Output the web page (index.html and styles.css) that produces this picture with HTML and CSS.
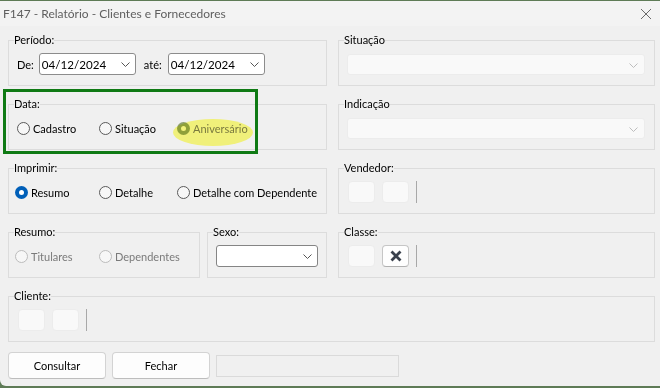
FILE: index.html
```html
<!DOCTYPE html>
<html>
<head>
  <meta charset="UTF-8">
  <title>F147 - Relatório - Clientes e Fornecedores</title>
  <link rel="stylesheet" href="styles.css">
</head>
<body>
  <div class="window">
    <div class="titlebar">
      <span class="title">F147 - Relatório - Clientes e Fornecedores</span>
      <svg class="close" width="12" height="12" viewBox="0 0 12 12">
        <path d="M1 1 L11 11 M11 1 L1 11" stroke="#6a6a6a" stroke-width="1" fill="none"/>
      </svg>
    </div>

    <div class="form">
      <fieldset class="group">
        <legend>Período:</legend>
        <div class="row">
          <span class="lbl">De:</span>
          <div class="date">04/12/2024
            <svg class="chev" width="9" height="5" viewBox="0 0 9 5"><path d="M0.5 0.5 L4.5 4.5 L8.5 0.5" stroke="#555" fill="none"/></svg>
          </div>
          <span class="lbl ate">até:</span>
          <div class="date">04/12/2024
            <svg class="chev" width="9" height="5" viewBox="0 0 9 5"><path d="M0.5 0.5 L4.5 4.5 L8.5 0.5" stroke="#555" fill="none"/></svg>
          </div>
        </div>
      </fieldset>

      <fieldset class="group">
        <legend>Situação</legend>
        <div class="row">
          <div class="combo off">
            <svg class="chev" width="9" height="5" viewBox="0 0 9 5"><path d="M0.5 0.5 L4.5 4.5 L8.5 0.5" stroke="#bdbdbd" fill="none"/></svg>
          </div>
        </div>
      </fieldset>

      <fieldset class="group">
        <legend>Data:</legend>
        <div class="row radios data-opts">
          <label class="radio"><span class="dot"></span>Cadastro</label>
          <label class="radio"><span class="dot"></span>Situação</label>
          <label class="radio disabled checked mark"><span class="dot"></span>Aniversário</label>
        </div>
      </fieldset>

      <fieldset class="group">
        <legend>Indicação</legend>
        <div class="row">
          <div class="combo off">
            <svg class="chev" width="9" height="5" viewBox="0 0 9 5"><path d="M0.5 0.5 L4.5 4.5 L8.5 0.5" stroke="#bdbdbd" fill="none"/></svg>
          </div>
        </div>
      </fieldset>

      <fieldset class="group">
        <legend>Imprimir:</legend>
        <div class="row radios print-opts">
          <label class="radio checked"><span class="dot"></span>Resumo</label>
          <label class="radio"><span class="dot"></span>Detalhe</label>
          <label class="radio"><span class="dot"></span>Detalhe com Dependente</label>
        </div>
      </fieldset>

      <fieldset class="group">
        <legend>Vendedor:</legend>
        <div class="row tools">
          <span class="tool"></span>
          <span class="tool"></span>
          <span class="sep"></span>
        </div>
      </fieldset>

      <div class="split">
        <fieldset class="group resumo">
          <legend>Resumo:</legend>
          <div class="row radios print-opts">
            <label class="radio disabled"><span class="dot"></span>Titulares</label>
            <label class="radio disabled"><span class="dot"></span>Dependentes</label>
          </div>
        </fieldset>
        <fieldset class="group sexo">
          <legend>Sexo:</legend>
          <div class="row">
            <div class="combo sexo-box">
              <svg class="chev" width="9" height="5" viewBox="0 0 9 5"><path d="M0.5 0.5 L4.5 4.5 L8.5 0.5" stroke="#555" fill="none"/></svg>
            </div>
          </div>
        </fieldset>
      </div>

      <fieldset class="group">
        <legend>Classe:</legend>
        <div class="row tools">
          <span class="tool"></span>
          <span class="tool active">
            <svg width="14" height="14" viewBox="0 0 14 14"><path d="M2.5 2.5 L11.5 11.5 M11.5 2.5 L2.5 11.5" stroke="#39404c" stroke-width="2.8" fill="none"/></svg>
          </span>
          <span class="sep"></span>
        </div>
      </fieldset>

      <fieldset class="group wide">
        <legend>Cliente:</legend>
        <div class="row tools">
          <span class="tool"></span>
          <span class="tool"></span>
          <span class="sep"></span>
        </div>
      </fieldset>
    </div>

    <div class="footer">
      <button class="btn">Consultar</button>
      <button class="btn">Fechar</button>
      <div class="status"></div>
    </div>

    <!-- annotation drawn over the dialog -->
    <div class="highlight-box"></div>
  </div>
</body>
</html>
```

FILE: styles.css
```css
body {
  margin: 0;
  background-color: #5e7b56;
  font-family: Lato, "Noto Sans", sans-serif;
  font-size: 11px;
  color: #000;
}

.window {
  position: relative;
  width: 660px;
  height: 386px;
  background-color: #f0f0f0;
  border-top: 1px solid #5e7b56;
  box-sizing: border-box;
  border-bottom-left-radius: 6px;
}

.titlebar {
  height: 25px;
  background-color: #f3f3f3;
  display: flex;
  align-items: center;
  justify-content: space-between;
  padding: 0 8px 0 3px;
}

.title {
  color: #5f5f5f;
  font-size: 12px;
}

.close {
  margin-top: 1px;
}

.form {
  display: grid;
  grid-template-columns: 319px 317px;
  column-gap: 11px;
  row-gap: 11px;
  padding: 7px 0 0 8px;
}

.group {
  margin: 0;
  height: 53px;
  box-sizing: border-box;
  border: 1px solid #dcdcdc;
  padding: 6px 8px 0 5px;
  min-width: 0;
}

.group legend {
  padding: 0;
  line-height: 14px;
  font-size: 11px;
}

.row {
  display: flex;
  align-items: center;
  height: 22px;
  padding-left: 3px;
}

.lbl {
  margin-right: 5px;
}

.lbl.ate {
  margin-left: 8px;
  margin-right: 6px;
}

.date,
.combo {
  position: relative;
  height: 22px;
  box-sizing: border-box;
  background-color: #fff;
  border: 1px solid #8c8c8c;
  border-radius: 3px;
  display: flex;
  align-items: center;
}

.date {
  width: 97px;
  padding-left: 2px;
  font-size: 11.6px;
}

.chev {
  position: absolute;
  right: 5px;
  top: 8px;
}

.combo.off {
  width: 298px;
  height: 21px;
  background-color: #f9f9f9;
  border-color: #ececec;
}

.combo.off .chev {
  right: 6px;
}

.sexo-box {
  width: 104px;
  border-color: #858585;
}

.radios {
  display: grid;
  grid-template-columns: 82px 78px auto;
}

.print-opts {
  grid-template-columns: 84px 78px auto;
  padding-left: 1px;
}

.radio {
  position: relative;
  display: flex;
  align-items: center;
  gap: 3px;
  white-space: nowrap;
}

.dot {
  flex-shrink: 0;
  width: 13px;
  height: 13px;
  box-sizing: border-box;
  border: 1px solid #5a5a5a;
  border-radius: 50%;
  background-color: #f7f7f7;
  display: flex;
  align-items: center;
  justify-content: center;
}

.radio.checked .dot {
  border: none;
  background-color: #005fb8;
}

.radio.checked .dot::after {
  content: "";
  width: 5px;
  height: 5px;
  border-radius: 50%;
  background-color: #fff;
}

.radio.disabled {
  color: #7a7a7a;
}

.radio.disabled .dot {
  border-color: #bcbcbc;
}

.radio.disabled.checked .dot {
  background-color: #8fa070;
}

.radio.disabled.checked .dot::after {
  background-color: #f2f2f2;
}

/* yellow marker over the option */
.radio.mark::after {
  content: "";
  position: absolute;
  left: -4px;
  top: -3px;
  width: 80px;
  height: 27px;
  border-radius: 50%;
  background-color: #ffff82;
  mix-blend-mode: multiply;
}

.tools {
  padding-left: 4px;
  gap: 7px;
}

.tool {
  width: 27px;
  height: 22px;
  box-sizing: border-box;
  border: 1px solid #ececec;
  border-radius: 4px;
  background-color: #f9f9f9;
  display: flex;
  align-items: center;
  justify-content: center;
}

.tool.active {
  background-color: #fefefe;
  border-color: #c6c6c6;
  border-bottom-color: #b0b0b0;
}

.sep {
  width: 1px;
  height: 22px;
  background-color: #a8a8a8;
}

.split {
  display: flex;
  gap: 7px;
}

.resumo {
  width: 192px;
}

.sexo {
  width: 120px;
}

.wide {
  grid-column: 1 / 3;
}

.footer {
  display: flex;
  align-items: center;
  gap: 6px;
  padding: 10px 0 0 8px;
}

.btn {
  width: 98px;
  height: 27px;
  font-family: inherit;
  font-size: 11px;
  color: #000;
  background-color: #fdfdfd;
  border: 1px solid #d3d3d3;
  border-bottom-color: #bdbdbd;
  border-radius: 4px;
  padding: 0;
}

.status {
  width: 183px;
  height: 22px;
  box-sizing: border-box;
  border: 1px solid #dadada;
}

.highlight-box {
  position: absolute;
  left: 3px;
  top: 88px;
  width: 255px;
  height: 65px;
  box-sizing: border-box;
  border: 3px solid #0f7a14;
}
```
